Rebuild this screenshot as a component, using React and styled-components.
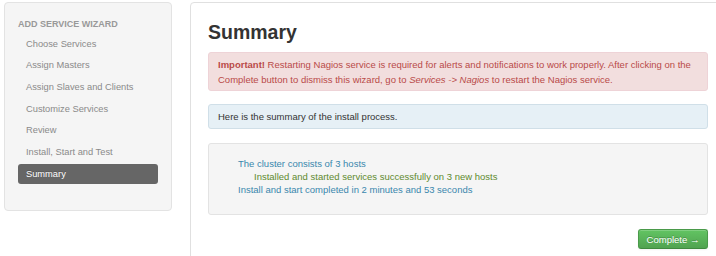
import React from "react";
import styled, { createGlobalStyle } from "styled-components";

const Global = createGlobalStyle`
  html, body { margin: 0; padding: 0; background: #fff; overflow: hidden; }
  body { font-family: "Liberation Sans", Arial, Helvetica, sans-serif; color: #333; }
`;

const Page = styled.div`
  display: flex;
  align-items: flex-start;
  gap: 18px;
  padding: 2px 0 0 4px;
  width: 760px;
`;

const Sidebar = styled.nav`
  flex: 0 0 168px;
  box-sizing: border-box;
  height: 209px;
  padding: 10.6px 13px 0;
  background: #f5f5f5;
  border: 1px solid #e3e3e3;
  border-radius: 4px;
`;

const NavHeader = styled.div`
  font-size: 9px;
  font-weight: bold;
  line-height: 20px;
  color: #999;
  text-transform: uppercase;
`;

const NavList = styled.ul`
  list-style: none;
  margin: 0;
  padding: 0;
  display: flex;
  flex-direction: column;
  gap: 1.67px;
`;

const NavItem = styled.li`
  font-size: 9.3px;
  line-height: 20px;
  padding: 0 8px;
  border-radius: 3px;
  color: ${(p) => (p.$active ? "#fff" : "#8a8a8a")};
  background: ${(p) => (p.$active ? "#666" : "transparent")};
  text-shadow: ${(p) => (p.$active ? "0 -1px 0 rgba(0,0,0,0.2)" : "none")};
`;

const Main = styled.main`
  flex: 0 0 536px;
  box-sizing: border-box;
  min-height: 270px;
  padding: 17px 17px 0;
  background: #fff;
  border: 1px solid #e0e0e0;
  border-radius: 4px;
  display: flex;
  flex-direction: column;
`;

const Title = styled.h3`
  margin: 0 0 8px;
  font-size: 19.5px;
  line-height: 24px;
  font-weight: bold;
  color: #333;
`;

const Box = styled.div`
  border-radius: 3px;
  border: 1px solid ${(p) => p.$border};
  background: ${(p) => p.$bg};
  color: ${(p) => p.$color};
  font-size: 9.5px;
`;

const Alert = styled(Box)`
  padding: 4px 9px 3px;
  line-height: 15px;
  margin-bottom: 13px;
`;

const Strong = styled.span`
  font-weight: bold;
`;

const Em = styled.span`
  font-style: italic;
`;

const Info = styled(Box)`
  padding: 4px 9px;
  line-height: 15px;
  margin-bottom: 14px;
`;

const Well = styled(Box)`
  padding: 13px 29px 18px;
  line-height: 13px;
  margin-bottom: 14px;
`;

const Line = styled.div`
  color: ${(p) => p.$color};
  padding-left: ${(p) => (p.$indent ? "16px" : "0")};
`;

const Actions = styled.div`
  display: flex;
  justify-content: flex-end;
`;

const Button = styled.button`
  box-sizing: border-box;
  width: 70px;
  height: 20px;
  padding: 0;
  font-family: inherit;
  font-size: 9.5px;
  color: #fff;
  text-shadow: 0 -1px 0 rgba(0,0,0,0.25);
  background: linear-gradient(#62c462, #51a351);
  border: 1px solid #4a9a4a;
  border-bottom-color: #3f8a3f;
  border-radius: 3px;
  box-shadow: inset 0 1px 0 rgba(255,255,255,0.2), 0 1px 2px rgba(0,0,0,0.05);
`;

const steps = [
  "Choose Services",
  "Assign Masters",
  "Assign Slaves and Clients",
  "Customize Services",
  "Review",
  "Install, Start and Test",
  "Summary",
];

export default function App() {
  return (
    <>
      <Global />
      <Page>
        <Sidebar>
          <NavHeader>Add Service Wizard</NavHeader>
          <NavList>
            {steps.map((s) => (
              <NavItem key={s} $active={s === "Summary"}>{s}</NavItem>
            ))}
          </NavList>
        </Sidebar>
        <Main>
          <Title>Summary</Title>
          <Alert $bg="#f2dede" $border="#eed3d7" $color="#b94a48">
            <Strong>Important!</Strong> Restarting Nagios service is required for alerts and notifications to work properly. After clicking on the Complete button to dismiss this wizard, go to <Em>Services -&gt; Nagios</Em> to restart the Nagios service.
          </Alert>
          <Info $bg="#e6f0f6" $border="#d0dfe8" $color="#333">
            Here is the summary of the install process.
          </Info>
          <Well $bg="#f5f5f5" $border="#e3e3e3" $color="#3a87ad">
            <Line $color="#3a87ad">The cluster consists of 3 hosts</Line>
            <Line $color="#5f8a2e" $indent>Installed and started services successfully on 3 new hosts</Line>
            <Line $color="#3a87ad">Install and start completed in 2 minutes and 53 seconds</Line>
          </Well>
          <Actions>
            <Button>Complete →</Button>
          </Actions>
        </Main>
      </Page>
    </>
  );
}
